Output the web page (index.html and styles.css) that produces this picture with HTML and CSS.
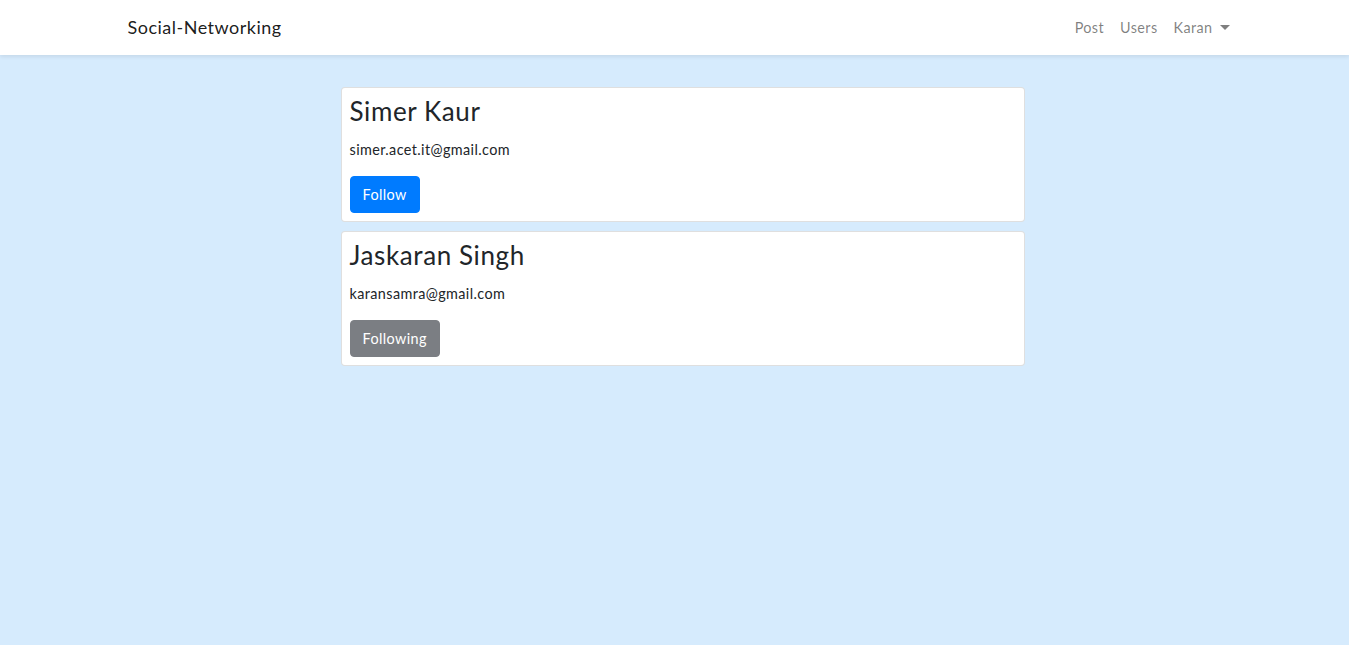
FILE: index.html
```html
<!DOCTYPE html>
<html lang="en">
<head>
<meta charset="utf-8">
<title>Social-Networking</title>
<link rel="stylesheet" href="styles.css">
</head>
<body>
<nav class="navbar">
  <div class="container nav-inner">
    <a class="brand" href="#">Social-Networking</a>
    <ul class="nav-links">
      <li><a href="#">Post</a></li>
      <li><a href="#">Users</a></li>
      <li><a href="#" class="dropdown">Karan <span class="caret"></span></a></li>
    </ul>
  </div>
</nav>
<main class="main">
  <div class="container">
    <div class="user-list">
      <div class="card">
        <h3 class="name">Simer Kaur</h3>
        <p class="email">simer.acet.it@gmail.com</p>
        <button class="btn btn-primary">Follow</button>
      </div>
      <div class="card">
        <h3 class="name">Jaskaran Singh</h3>
        <p class="email">karansamra@gmail.com</p>
        <button class="btn btn-secondary">Following</button>
      </div>
    </div>
  </div>
</main>
</body>
</html>
```

FILE: styles.css
```css
* { box-sizing: border-box; }
html, body { margin: 0; padding: 0; }
body {
  font-family: "Lato", "Open Sans", sans-serif;
  font-size: 14.4px;
  line-height: 1.6;
  letter-spacing: 0.4px;
  color: #212529;
  background: #d6ebfd;
  min-height: 645px;
}
.container {
  width: 1140px;
  margin: 0 auto;
  padding: 0 15px;
}
.navbar {
  background: #fff;
  height: 55px;
  box-shadow: 0 2px 4px rgba(0,0,0,0.08);
}
.nav-inner {
  display: flex;
  align-items: center;
  justify-content: space-between;
  height: 55px;
}
.brand {
  font-size: 18px;
  color: rgba(0,0,0,0.9);
  text-decoration: none;
  padding-left: 8px;
  letter-spacing: 0.5px;
}
.nav-links {
  list-style: none;
  margin: 0;
  padding: 0;
  display: flex;
}
.nav-links a {
  display: flex;
  align-items: center;
  padding: 8px;
  color: rgba(0,0,0,0.5);
  text-decoration: none;
  font-size: 14.4px;
}
.nav-links li:last-child a { padding-right: 0; }
.caret {
  display: inline-block;
  margin-left: 7px;
  width: 0;
  height: 0;
  border-left: 5px solid transparent;
  border-right: 5px solid transparent;
  border-top: 5px solid rgba(0,0,0,0.5);
}
.main { padding-top: 32px; }
.user-list {
  margin-left: 221px;
  width: 684px;
  display: flex;
  flex-direction: column;
  gap: 9px;
}
.card {
  background: #fff;
  border: 1px solid rgba(0,0,0,0.125);
  border-radius: 4px;
  padding: 8px 8px 8px;
}
.name {
  margin: 0 0 11px;
  font-size: 26px;
  font-weight: 400;
  line-height: 31px;
  letter-spacing: 0.6px;
}
.email {
  margin: 0 0 15px;
}
.btn {
  font-family: inherit;
  font-size: 14.4px;
  line-height: 23px;
  letter-spacing: 0.4px;
  padding: 6px 12px;
  border: 1px solid transparent;
  border-radius: 4px;
  color: #fff;
  cursor: pointer;
}
.btn-primary { background: #007bff; border-color: #007bff; }
.btn-secondary { background: #7b7e83; border-color: #7b7e83; }
```
